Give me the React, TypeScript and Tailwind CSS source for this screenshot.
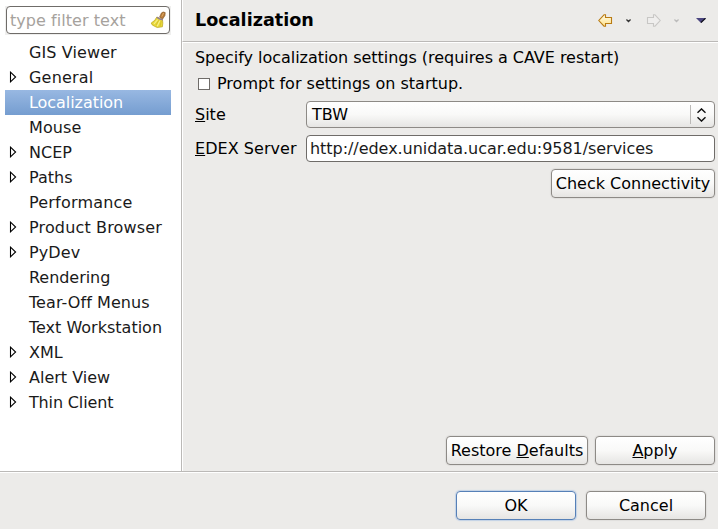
import type { ReactNode } from "react";

type Item = { label: string; expandable?: boolean; selected?: boolean; tracking?: string };

const items: Item[] = [
  { label: "GIS Viewer", tracking: "tracking-[0.1px]" },
  { label: "General", expandable: true, tracking: "tracking-[0.2px]" },
  { label: "Localization", selected: true, tracking: "tracking-[-0.05px]" },
  { label: "Mouse", tracking: "tracking-[0.1px]" },
  { label: "NCEP", expandable: true },
  { label: "Paths", expandable: true },
  { label: "Performance", tracking: "tracking-[0.2px]" },
  { label: "Product Browser", expandable: true, tracking: "tracking-[0.15px]" },
  { label: "PyDev", expandable: true, tracking: "tracking-[0.1px]" },
  { label: "Rendering", tracking: "tracking-[-0.05px]" },
  { label: "Tear-Off Menus", tracking: "tracking-[0.07px]" },
  { label: "Text Workstation" },
  { label: "XML", expandable: true },
  { label: "Alert View", expandable: true },
  { label: "Thin Client", expandable: true, tracking: "tracking-[-0.15px]" },
];

function Mnemonic({ children }: { children: ReactNode }) {
  return <span className="underline decoration-1 underline-offset-1">{children}</span>;
}

function Button({ children, className = "", primary = false }: { children: ReactNode; className?: string; primary?: boolean }) {
  return (
    <button
      className={`flex h-[29px] shrink-0 items-center justify-center whitespace-nowrap rounded-[4px] border bg-linear-to-b from-white via-[#f9f9f8] via-50% to-[#e6e5e3] text-black ${
        primary ? "border-[#5680b7] shadow-[0_0_1px_1px_#c3d2e6]" : "border-[#8d8a86] shadow-[0_0_1px_1px_rgba(0,0,0,0.05)]"
      } ${className}`}
    >
      {children}
    </button>
  );
}

function Broom() {
  return (
    <svg width="16" height="18" viewBox="0 0 16 18" className="shrink-0">
      <path d="M9.6 6.2 L11.4 2 Q13 .2 15.2 1.6 L14.9 4.6 L12.6 8 Z" fill="#b87c3b" stroke="#8a5a28" strokeWidth=".7" />
      <path d="M13.6 2 L11.8 5.6" stroke="#e0ac68" strokeWidth="1" />
      <path d="M6.8 6 Q5.4 9.8 1.2 12 L2.2 13.9 L4.4 15.2 L7.2 16.5 L12.4 15.8 Q13.2 12 12.5 8.8 Z" fill="#e8d83a" stroke="#b9a41c" strokeWidth=".7" />
      <path d="M7.6 8.6 L4 13 M9.8 9.8 L7.3 15.3" stroke="#f8f08c" strokeWidth="1.1" />
      <path d="M8.8 9.2 L6 14 M11.2 10 L10 15.3" stroke="#c9b424" strokeWidth=".6" />
      <path d="M7 6.2 Q9 8.3 12.8 8.8" fill="none" stroke="#8e7c96" strokeWidth="1.6" />
    </svg>
  );
}

function Arrow({ forward = false }: { forward?: boolean }) {
  return (
    <svg width="15" height="13" viewBox="0 0 15 13" className={forward ? "-scale-x-100" : ""}>
      <defs>
        <linearGradient id="gold" x1="0" y1="0" x2="0" y2="1">
          <stop offset="0" stopColor="#fffbe5" />
          <stop offset="1" stopColor="#ffe28c" />
        </linearGradient>
      </defs>
      <path
        d="M6 .8 L.8 6.5 L6 12.2 L7.5 12.2 L7.5 9.5 L13.5 9.5 L13.5 3.5 L7.5 3.5 L7.5 .8 Z"
        fill={forward ? "#efeeed" : "url(#gold)"}
        stroke={forward ? "#c8c7c5" : "#b97b13"}
        strokeWidth="1.1"
      />
    </svg>
  );
}

function Chevron({ color }: { color: string }) {
  return (
    <svg width="5" height="4" viewBox="0 0 5 4">
      <path d="M.4 .5 L2.5 2.5 L4.6 .5" fill="none" stroke={color} strokeWidth="1.4" />
    </svg>
  );
}

export default function App() {
  return (
    <div className="flex h-[529px] w-[718px] flex-col overflow-hidden bg-[#ecebe9] font-['DejaVu_Sans',sans-serif] text-[16px] leading-[25px] text-black">
      <div className="flex h-[471px]">
        <aside className="w-[181px] shrink-0 bg-white pt-[6px] pl-[5px] text-[#1a1a1a]">
          <div className="w-[166px] bg-[#efefee] px-px pb-px">
            <div className="flex h-[28px] items-center justify-between rounded-[4px] border-[1.5px] border-[#6f6c69] bg-white pr-[3px] pl-[3px] text-[#a6a29d]">
              <span className="tracking-[0.05px]">type filter text</span>
              <Broom />
            </div>
          </div>
          <ul className="mt-[5px] w-[166px]">
            {items.map((item) => (
              <li
                key={item.label}
                className={`flex h-[25px] items-center whitespace-nowrap ${item.tracking ?? ""} ${
                  item.selected ? "bg-linear-to-b from-[#98b8e2] to-[#759dd0] text-white" : ""
                }`}
              >
                <span className="flex h-[25px] w-[24px] shrink-0 pt-[6px] pl-[4px]">
                  {item.expandable && (
                    <svg width="9" height="12" viewBox="0 0 9 12">
                      <path d="M1.5 1.2 L6.6 6 L1.5 10.8 Z" fill="white" stroke="black" strokeWidth="1.1" />
                    </svg>
                  )}
                </span>
                {item.label}
              </li>
            ))}
          </ul>
        </aside>
        <main className="flex flex-1 flex-col border-l border-[#bbb9b7]">
          <header className="flex h-[42px] shrink-0 items-center justify-between border-b border-l border-b-[#bbb9b7] border-l-white pr-[12px] pl-[12px]">
            <h1 className="text-[17.6px] font-bold">Localization</h1>
            <div className="flex items-center">
              <Arrow />
              <span className="ml-[13px]"><Chevron color="#333" /></span>
              <span className="ml-[15px]"><Arrow forward /></span>
              <span className="ml-[13px]"><Chevron color="#bbb" /></span>
              <svg width="10" height="5" viewBox="0 0 10 5" className="ml-[17px]">
                <path d="M0 0 H10 L5 5 Z" fill="#4b4680" />
                <path d="M9.5 .3 L5 4.5" fill="none" stroke="#11111b" strokeWidth="1.2" />
              </svg>
            </div>
          </header>
          <section className="flex flex-1 flex-col border-t border-l border-white pr-[3px] pb-[6px] pl-[12px]">
            <p className="mt-[2px] h-[25px] tracking-[-0.035px]">Specify localization settings (requires a CAVE restart)</p>
            <label className="mt-px flex h-[25px] items-center">
              <span className="mr-[7px] ml-[3px] size-[12px] border border-[#6f6c69] bg-white" />
              Prompt for settings on startup.
            </label>
            <div className="mt-[5px] flex h-[27px] items-center">
              <span className="w-[111px]"><Mnemonic>S</Mnemonic>ite</span>
              <div className="flex h-[27px] flex-1 items-center rounded-[4px] border border-[#8d8a86] bg-linear-to-b from-white via-[#f9f9f8] via-50% to-[#e6e5e3] pl-[5px]">
                <span className="flex-1">TBW</span>
                <span className="flex h-[19px] w-[24px] items-center justify-center border-l border-[#bbb9b7] pr-[2px]">
                  <svg width="11" height="14" viewBox="0 0 11 14">
                    <path d="M1.5 4.7 L5.5 .9 L9.5 4.7 M1.5 9.3 L5.5 13.1 L9.5 9.3" fill="none" stroke="#111" strokeWidth="1.4" />
                  </svg>
                </span>
              </div>
            </div>
            <div className="mt-[7px] flex h-[27px] items-center">
              <span className="w-[111px] whitespace-nowrap tracking-[0.05px]"><Mnemonic>E</Mnemonic>DEX Server</span>
              <div className="flex h-[27px] flex-1 items-center rounded-[4px] border border-[#6f6c69] bg-white pl-[3px] tracking-[-0.045px] text-[#1a1a1a]">
                http://edex.unidata.ucar.edu:9581/services
              </div>
            </div>
            <Button className="mt-[7px] w-[164px] self-end">Check Connectivity</Button>
            <div className="mt-auto flex justify-end gap-[7px]">
              <Button className="w-[142px]"><span>Restore <Mnemonic>D</Mnemonic>efaults</span></Button>
              <Button className="w-[120px]"><span><Mnemonic>A</Mnemonic>pply</span></Button>
            </div>
          </section>
        </main>
      </div>
      <div className="h-px shrink-0 bg-[#bbb9b7]" />
      <footer className="flex flex-1 justify-end gap-[10px] border-t border-white pt-[18px] pr-[12px]">
        <Button primary className="w-[120px]">OK</Button>
        <Button className="w-[120px]">Cancel</Button>
      </footer>
    </div>
  );
}
